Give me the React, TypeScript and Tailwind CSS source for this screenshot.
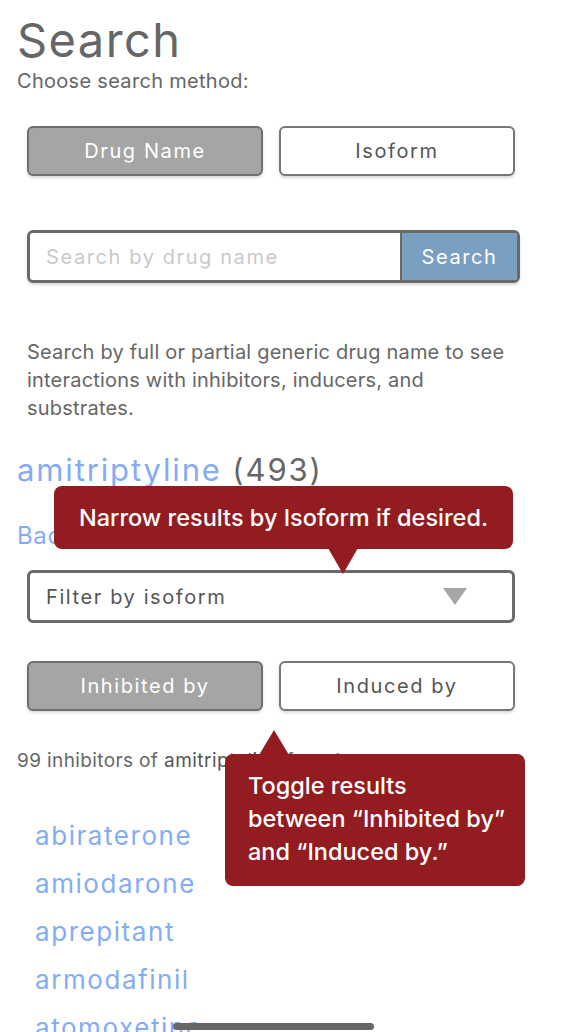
import { useState } from "react";

const drugs = [
  "abiraterone",
  "amiodarone",
  "aprepitant",
  "armodafinil",
  "atomoxetine",
  "bupropion",
];

export default function App() {
  const [method, setMethod] = useState<"drug" | "isoform">("drug");
  const [mode, setMode] = useState<"inhibited" | "induced">("inhibited");

  const toggleClass = (active: boolean) =>
    active
      ? "bg-[#a5a5a5] text-white border-[#6f6f6f]"
      : "bg-white text-[#555] border-[#777]";

  return (
    <div
      className="relative h-[1032px] w-full overflow-hidden bg-white text-[#666]"
      style={{ fontFamily: "Inter, 'Open Sans', sans-serif" }}
    >
      <div className="px-[17px] pt-4">
        {/* Header */}
        <h1 className="text-[47px] leading-[48px] font-normal tracking-[0.03em] text-[#666]">
          Search
        </h1>
        <p className="mt-[5px] text-[20px] leading-[24px] tracking-[0.015em] text-[#666]">Choose search method:</p>

        {/* Method toggle */}
        <div className="mt-[33px] ml-[10px] flex w-[488px] gap-4">
          <button
            type="button"
            onClick={() => setMethod("drug")}
            className={`h-[50px] flex-1 rounded-md border-2 text-[20px] tracking-[0.08em] shadow-[0_2px_3px_rgba(0,0,0,0.15)] ${toggleClass(method === "drug")}`}
          >
            Drug Name
          </button>
          <button
            type="button"
            onClick={() => setMethod("isoform")}
            className={`h-[50px] flex-1 rounded-md border-2 text-[20px] tracking-[0.08em] shadow-[0_2px_3px_rgba(0,0,0,0.15)] ${toggleClass(method === "isoform")}`}
          >
            Isoform
          </button>
        </div>

        {/* Search box */}
        <div className="mt-[54px] ml-[10px] flex h-[53px] w-[493px] overflow-hidden rounded-md border-[3px] border-[#6a6a6a] shadow-[0_2px_3px_rgba(0,0,0,0.15)]">
          <input
            className="min-w-0 flex-1 px-4 text-[20px] tracking-[0.08em] text-[#555] outline-none placeholder:text-[#c9c9c9]"
            placeholder="Search by drug name"
          />
          <button
            type="button"
            className="w-[117px] border-l-2 border-[#6a6a6a] bg-[#7a9fc0] text-[20px] tracking-[0.08em] text-white"
          >
            Search
          </button>
        </div>

        <p className="mt-[55px] ml-[10px] text-[20px] leading-[28px] tracking-[0.01em] text-[#666]">
          Search by full or partial generic drug name to see
          <br />
          interactions with inhibitors, inducers, and
          <br />
          substrates.
        </p>

        {/* Result */}
        <div className="mt-[30px] text-[31px] leading-[36px] tracking-[0.06em]">
          <a className="text-[#84acf5]">amitriptyline</a> <span className="text-[#666]">(493)</span>
        </div>
        <a className="mt-[33px] block text-[24px] leading-[30px] tracking-wide text-[#84acf5]">Back to search</a>

        {/* Isoform filter */}
        <div className="mt-[19px] ml-[10px] flex h-[53px] w-[488px] items-center justify-between rounded-md border-[3px] border-[#6a6a6a] pl-4 pr-[45px]">
          <span className="text-[20px] tracking-[0.08em] text-[#555]">Filter by isoform</span>
          <svg width="24" height="17" viewBox="0 0 24 17">
            <polygon points="0,0 24,0 12,17" fill="#a6a6a6" />
          </svg>
        </div>

        {/* Interaction toggle */}
        <div className="mt-[38px] ml-[10px] flex w-[488px] gap-4">
          <button
            type="button"
            onClick={() => setMode("inhibited")}
            className={`h-[50px] flex-1 rounded-md border-2 text-[20px] tracking-[0.08em] shadow-[0_2px_3px_rgba(0,0,0,0.15)] ${toggleClass(mode === "inhibited")}`}
          >
            Inhibited by
          </button>
          <button
            type="button"
            onClick={() => setMode("induced")}
            className={`h-[50px] flex-1 rounded-md border-2 text-[20px] tracking-[0.08em] shadow-[0_2px_3px_rgba(0,0,0,0.15)] ${toggleClass(mode === "induced")}`}
          >
            Induced by
          </button>
        </div>

        <p className="mt-[36px] text-[19px] leading-[28px] tracking-[0.02em] text-[#666]">
          99 inhibitors of <span className="tracking-wide text-[#555]">amitriptyline</span> found
        </p>

        <ul className="mt-[37px] pl-[18px]">
          {drugs.map((d) => (
            <li key={d} className="text-[26px] leading-[48px] tracking-[0.06em] text-[#84acf5]">
              {d}
            </li>
          ))}
        </ul>
      </div>

      {/* Tooltip: isoform */}
      <div className="absolute left-[54px] top-[486px] flex h-[63px] w-[459px] items-center justify-center rounded-lg bg-[#931c20] text-[23.5px] font-medium whitespace-nowrap text-white">
        Narrow results by Isoform if desired.
        <svg className="absolute left-[274px] top-[62px]" width="30" height="26" viewBox="0 0 30 26">
          <polygon points="0,0 30,0 15,26" fill="#931c20" />
        </svg>
      </div>

      {/* Tooltip: toggle */}
      <div className="absolute left-[225px] top-[754px] h-[132px] w-[300px] rounded-lg bg-[#931c20] pl-[23px] pt-[15px] text-[23.5px] leading-[33px] font-medium whitespace-nowrap text-white">
        <svg className="absolute left-[34px] top-[-24px]" width="30" height="25" viewBox="0 0 30 25">
          <polygon points="0,25 30,25 15,0" fill="#931c20" />
        </svg>
        Toggle results
        <br />
        between “Inhibited by”
        <br />
        and “Induced by.”
      </div>

      {/* Home indicator */}
      <div className="absolute bottom-[2px] left-[173px] h-[7px] w-[201px] rounded-full bg-[#666]" />
    </div>
  );
}
